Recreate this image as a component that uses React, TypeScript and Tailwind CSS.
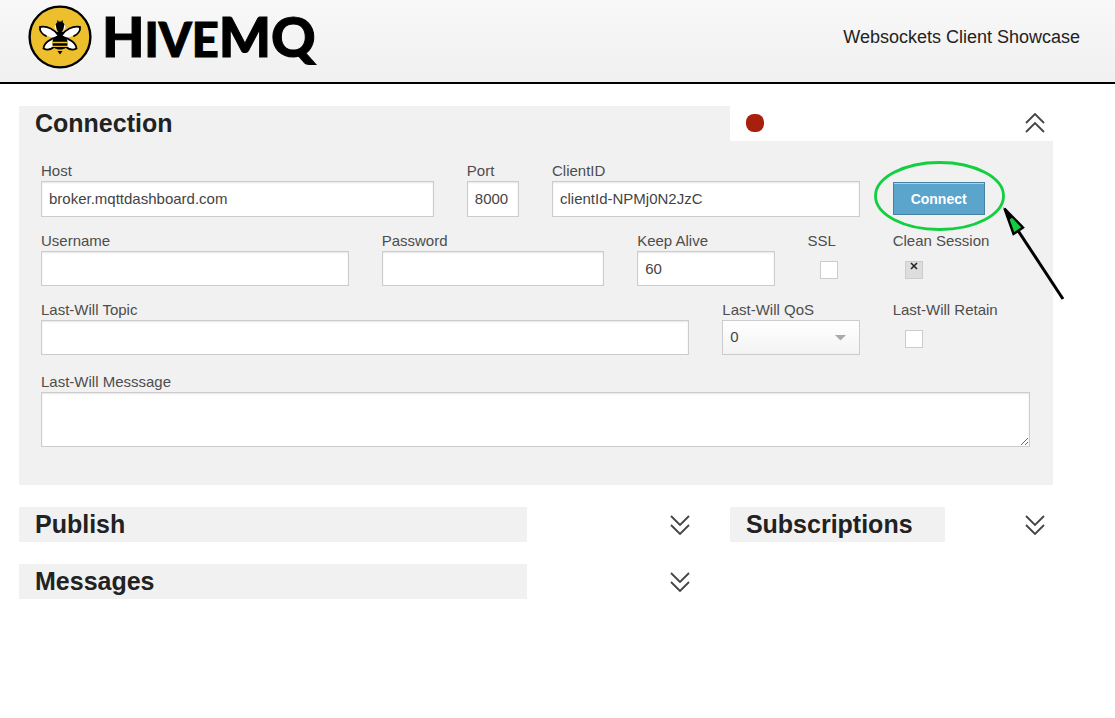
import React, { useState } from "react";

const inputStyle =
  "block w-full bg-white border border-[#ccc] px-[7px] text-[15px] text-[#444] shadow-[inset_0_1px_2px_rgba(0,0,0,0.1)] outline-none focus:border-[#999]";

const BeeLogo = () => (
  <svg width="64" height="64" viewBox="0 0 64 64" className="shrink-0">
    <circle cx="32" cy="32" r="30.4" fill="#edbf2c" stroke="#000" strokeWidth="2.4" />
    {/* wings */}
    <g fill="#fff">
      <path d="M31 31C27 24.5 19 20.5 12 22C12 27 18 33.500 30 32.500Z" />
      <path d="M33 31C37 24.500 45 20.500 52 22C52 27 46 33.500 34 32.500Z" />
      <path d="M30 32C23 33 17 37 16 43.500C19 45 24 43.500 26 41L31 33Z" />
      <path d="M34 32C41 33 47 37 48 43.500C45 45 40 43.500 38 41L33 33Z" />
    </g>
    <g fill="none" stroke="#000" strokeWidth="1.8" strokeLinecap="round">
      <path d="M31 31C27 24.500 19 20.500 12 22C11.500 25.500 14 29 18 31" />
      <path d="M33 31C37 24.500 45 20.500 52 22C52.500 25.500 50 29 46 31" />
      <path d="M30 32C22 33.500 16 38 15.500 43.500C19 45.500 23 44.500 26 42" />
      <path d="M34 32C42 33.500 48 38 48.500 43.500C45 45.500 41 44.500 38 42" />
    </g>
    {/* head */}
    <path d="M30.500 18L29.500 15.500M33.500 18L34.500 15.500" stroke="#000" strokeWidth="1.200" />
    <circle cx="32" cy="21.500" r="5" fill="#000" />
    <path d="M27.500 19C26 21.500 26.500 24 29 26ZM36.500 19C38 21.500 37.500 24 35 26Z" fill="#fff" />
    <path d="M28.500 27.500L32 25L35.500 27.500L32 31Z" fill="#000" />
    {/* body */}
    <path d="M32 29.500C36.500 31 39.500 33.500 39.500 37V40C39 46 25 46 24.500 40V37C24.500 33.500 27.500 31 32 29.500Z" fill="#000" />
    <path d="M24 37.500H40M24.500 41.300H39.500" stroke="#edbf2c" strokeWidth="1.300" />
    <path d="M29.500 46H34.500L32 49.500Z" fill="#000" />
  </svg>
);

const Toggle = ({
  open,
  label,
  onClick,
}: {
  open: boolean;
  label: string;
  onClick?: () => void;
}) => (
  <button type="button" aria-label={label} onClick={onClick} className="cursor-pointer">
    <svg
      width="20"
      height="20"
      viewBox="0 0 20 20"
      fill="none"
      stroke="#444"
      strokeWidth="1.800"
      className={open ? "" : "rotate-180"}
    >
      <path d="M1 10L10 1L19 10M1 19L10 10L19 19" />
    </svg>
  </button>
);

const Field = ({
  id,
  label,
  className,
  children,
}: {
  id: string;
  label: string;
  className?: string;
  children: React.ReactNode;
}) => (
  <div className={className}>
    <label htmlFor={id} className="block text-[15px] leading-5 text-[#4d4d4d] whitespace-nowrap">
      {label}
    </label>
    {children}
  </div>
);

const CheckBox = ({ id, checked = false }: { id: string; checked?: boolean }) => (
  <div className="relative ml-3 mt-2.5 size-[18px]">
    <input
      id={id}
      type="checkbox"
      defaultChecked={checked}
      className="peer block size-full appearance-none bg-white border border-[#ccc] checked:bg-[#ddd]"
    />
    <svg
      viewBox="0 0 8 8"
      className="hidden peer-checked:block absolute left-[5px] top-px size-2 pointer-events-none"
      stroke="#222"
      strokeWidth="1.600"
    >
      <path d="M1 1L7 7M7 1L1 7" />
    </svg>
  </div>
);

const SectionTitle = ({ children }: { children: React.ReactNode }) => (
  <h2 className="bg-[#f1f1f1] h-[35px] pl-4 text-[25px] leading-[35px] font-bold text-[#222]">
    {children}
  </h2>
);

const App = () => {
  const [open, setOpen] = useState(true);

  return (
    <div className="min-h-screen bg-white font-['Liberation_Sans',Arial,sans-serif]">
      {/* HEADER */}
      <header className="flex items-center justify-between h-[84px] pl-7 pr-[35px] pb-2 border-b-2 border-black bg-linear-to-b from-[#f8f8f8] to-[#f0f0f0]">
        <a href="#" className="flex items-center gap-2.5 text-black">
          <BeeLogo />
          <span className="font-[Lato,sans-serif] font-black text-[55px] leading-[60px] whitespace-nowrap [-webkit-text-stroke:1px_black]">
            H<span className="text-[47px]">IVE</span>MQ
          </span>
        </a>
        <h1 className="text-[18px] text-[#222]">Websockets Client Showcase</h1>
      </header>

      <main className="pl-[19px] pr-[62px] pt-[22px]">
        {/* CONNECTION */}
        <section>
          <div className="grid grid-cols-[11fr_5fr]">
            <SectionTitle>Connection</SectionTitle>
            <div className="flex items-center justify-between pl-4 pr-2 pb-0.5">
              <div className="size-[18px] rounded-[8px] bg-[#a8200d]" />
              <Toggle open={open} label="Toggle connection" onClick={() => setOpen(!open)} />
            </div>
          </div>
          {open && (
            <form
              className="bg-[#f1f1f1] pl-[22px] pr-[23px] pt-5 pb-[38px]"
              onSubmit={(e) => e.preventDefault()}
            >
              <div className="grid grid-cols-12 gap-x-[33px] mb-3.5">
                <Field id="host" label="Host" className="col-span-5">
                  <input id="host" type="text" defaultValue="broker.mqttdashboard.com" className={`${inputStyle} h-9 pb-0.5`} />
                </Field>
                <Field id="port" label="Port" className="col-span-1">
                  <input id="port" type="text" defaultValue="8000" className={`${inputStyle} h-9 pb-0.5`} />
                </Field>
                <Field id="clientId" label="ClientID" className="col-span-4">
                  <input id="clientId" type="text" defaultValue="clientId-NPMj0N2JzC" className={`${inputStyle} h-9 pb-0.5`} />
                </Field>
                <div className="col-span-2 pt-[21px]">
                  <div className="relative w-[92px]">
                    <button
                      type="submit"
                      className="block w-full h-[33px] bg-[#5ba4cb] border border-[#4682a3] text-white text-sm font-bold shadow-[inset_0_1px_0_rgba(255,255,255,0.5)] cursor-pointer"
                    >
                      Connect
                    </button>
                    {/* highlight around the button */}
                    <svg
                      width="200"
                      height="150"
                      viewBox="0 0 200 150"
                      className="absolute -left-[23px] -top-[27px] max-w-none pointer-events-none"
                    >
                      <ellipse cx="69.500" cy="41" rx="64" ry="33.500" fill="none" stroke="#12cf40" strokeWidth="2.800" />
                      <path d="M147 74L193 144" stroke="#000" strokeWidth="3" />
                      <path d="M134.500 53.500L153 72.500L143.500 79Z" fill="#12cf40" stroke="#000" strokeWidth="2.400" />
                      <path d="M133 52L143 62L139 65Z" />
                    </svg>
                  </div>
                </div>
              </div>

              <div className="grid grid-cols-12 gap-x-[33px] mb-3.5">
                <Field id="username" label="Username" className="col-span-4">
                  <input id="username" type="text" className={`${inputStyle} h-[35px]`} />
                </Field>
                <Field id="password" label="Password" className="col-span-3">
                  <input id="password" type="password" className={`${inputStyle} h-[35px]`} />
                </Field>
                <Field id="keepAlive" label="Keep Alive" className="col-span-2">
                  <input id="keepAlive" type="text" defaultValue="60" className={`${inputStyle} h-[35px]`} />
                </Field>
                <Field id="ssl" label="SSL" className="col-span-1">
                  <CheckBox id="ssl" />
                </Field>
                <Field id="cleanSession" label="Clean Session" className="col-span-2">
                  <CheckBox id="cleanSession" checked />
                </Field>
              </div>

              <div className="grid grid-cols-12 gap-x-[33px] mb-[17px]">
                <Field id="lwTopic" label="Last-Will Topic" className="col-span-8">
                  <input id="lwTopic" type="text" className={`${inputStyle} h-[35px]`} />
                </Field>
                <Field id="lwQos" label="Last-Will QoS" className="col-span-2">
                  <div className="relative">
                    <select
                      id="lwQos"
                      className="block w-full h-[35px] appearance-none border border-[#ccc] bg-linear-to-b from-white to-[#f3f3f3] px-[7px] text-[15px] text-[#444]"
                    >
                      <option>0</option>
                      <option>1</option>
                      <option>2</option>
                    </select>
                    <svg
                      width="11"
                      height="6"
                      viewBox="0 0 11 6"
                      fill="#aaa"
                      className="absolute right-3.5 top-[15px] pointer-events-none"
                    >
                      <path d="M0 0H11L5.500 5.500Z" />
                    </svg>
                  </div>
                </Field>
                <Field id="lwRetain" label="Last-Will Retain" className="col-span-2">
                  <CheckBox id="lwRetain" />
                </Field>
              </div>

              <Field id="lwMessage" label="Last-Will Messsage">
                <textarea id="lwMessage" className={`${inputStyle} h-[55px] resize`} />
              </Field>
            </form>
          )}
        </section>

        <div className="grid grid-cols-[11fr_5fr] gap-y-[22px] mt-[22px]">
          {/* PUBLISH */}
          <section className="grid grid-cols-[5fr_2fr] items-center">
            <SectionTitle>Publish</SectionTitle>
            <div className="flex justify-end pr-10">
              <Toggle open={false} label="Toggle publish" />
            </div>
          </section>
          {/* SUBSCRIPTIONS */}
          <section className="grid grid-cols-[2fr_1fr] items-center">
            <SectionTitle>Subscriptions</SectionTitle>
            <div className="flex justify-end pr-2">
              <Toggle open={false} label="Toggle subscriptions" />
            </div>
          </section>
          {/* MESSAGES */}
          <section className="grid grid-cols-[5fr_2fr] items-center">
            <SectionTitle>Messages</SectionTitle>
            <div className="flex justify-end pr-10">
              <Toggle open={false} label="Toggle messages" />
            </div>
          </section>
        </div>
      </main>
    </div>
  );
};

export default App;
